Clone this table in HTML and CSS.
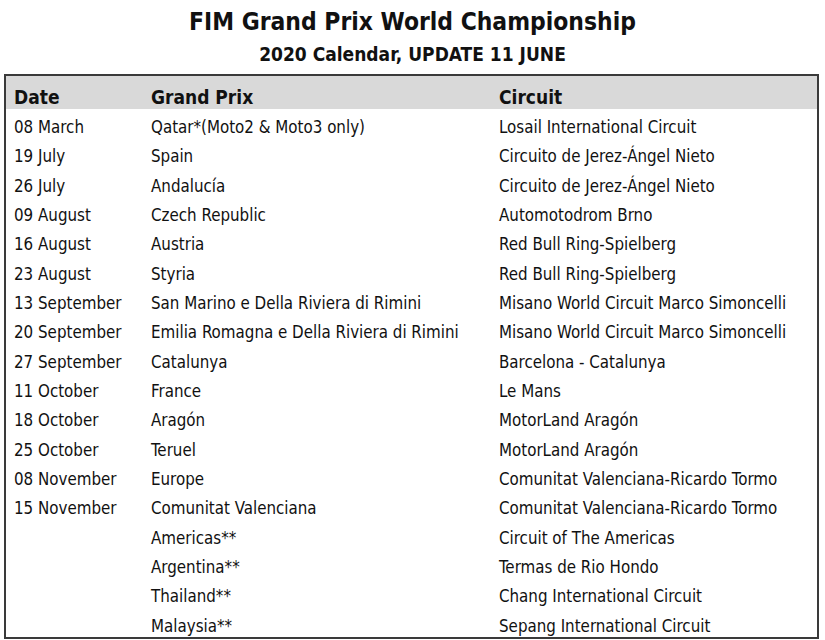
FILE: index.html
```html
<!DOCTYPE html>
<html>
<head>
<meta charset="utf-8">
<link rel="stylesheet" href="styles.css">
</head>
<body>
<div class="page">
  <h1 class="title">FIM Grand Prix World Championship</h1>
  <h2 class="subtitle">2020 Calendar, UPDATE 11 JUNE</h2>
  <table class="cal">
    <thead>
      <tr><th class="c-date">Date</th><th class="c-gp">Grand Prix</th><th class="c-circ">Circuit</th></tr>
    </thead>
    <tbody>
      <tr><td>08 March</td><td>Qatar*(Moto2 &amp; Moto3 only)</td><td>Losail International Circuit</td></tr>
      <tr><td>19 July</td><td>Spain</td><td>Circuito de Jerez-Ángel Nieto</td></tr>
      <tr><td>26 July</td><td>Andalucía</td><td>Circuito de Jerez-Ángel Nieto</td></tr>
      <tr><td>09 August</td><td>Czech Republic</td><td>Automotodrom Brno</td></tr>
      <tr><td>16 August</td><td>Austria</td><td>Red Bull Ring-Spielberg</td></tr>
      <tr><td>23 August</td><td>Styria</td><td>Red Bull Ring-Spielberg</td></tr>
      <tr><td>13 September</td><td>San Marino e Della Riviera di Rimini</td><td>Misano World Circuit Marco Simoncelli</td></tr>
      <tr><td>20 September</td><td>Emilia Romagna e Della Riviera di Rimini</td><td>Misano World Circuit Marco Simoncelli</td></tr>
      <tr><td>27 September</td><td>Catalunya</td><td>Barcelona - Catalunya</td></tr>
      <tr><td>11 October</td><td>France</td><td>Le Mans</td></tr>
      <tr><td>18 October</td><td>Aragón</td><td>MotorLand Aragón</td></tr>
      <tr><td>25 October</td><td>Teruel</td><td>MotorLand Aragón</td></tr>
      <tr><td>08 November</td><td>Europe</td><td>Comunitat Valenciana-Ricardo Tormo</td></tr>
      <tr><td>15 November</td><td>Comunitat Valenciana</td><td>Comunitat Valenciana-Ricardo Tormo</td></tr>
      <tr><td></td><td>Americas**</td><td>Circuit of The Americas</td></tr>
      <tr><td></td><td>Argentina**</td><td>Termas de Rio Hondo</td></tr>
      <tr><td></td><td>Thailand**</td><td>Chang International Circuit</td></tr>
      <tr><td></td><td>Malaysia**</td><td>Sepang International Circuit</td></tr>
    </tbody>
  </table>
</div>
</body>
</html>
```
FILE: styles.css
```css
html, body {
  margin: 0;
  padding: 0;
  background: #ffffff;
}
.page {
  width: 825px;
  padding-top: 6px;
  font-family: "DejaVu Sans Condensed", "DejaVu Sans", sans-serif;
  color: #111111;
}
.title {
  margin: 0;
  text-align: center;
  font-size: 24.4px;
  line-height: 32px;
  font-weight: bold;
}
.subtitle {
  margin: 0;
  text-align: center;
  font-size: 19px;
  line-height: 32px;
  font-weight: bold;
}
.cal {
  margin: 4px 0 0 4px;
  width: 815px;
  border-collapse: collapse;
  border: 2px solid #3a3a3a;
  table-layout: fixed;
}
.cal th {
  background: #d9d9d9;
  text-align: left;
  font-size: 19px;
  font-weight: bold;
  height: 25px;
  padding: 8px 0 0 0;
  vertical-align: middle;
}
.cal td {
  font-size: 16.8px;
  line-height: 20px;
  height: 21.33px;
  padding: 8px 0 0 0;
  vertical-align: top;
  white-space: nowrap;
}
.cal th:first-child, .cal td:first-child {
  padding-left: 8px;
}
.c-date { width: 137px; }
.c-gp { width: 348px; }
.c-circ { width: auto; }
```
